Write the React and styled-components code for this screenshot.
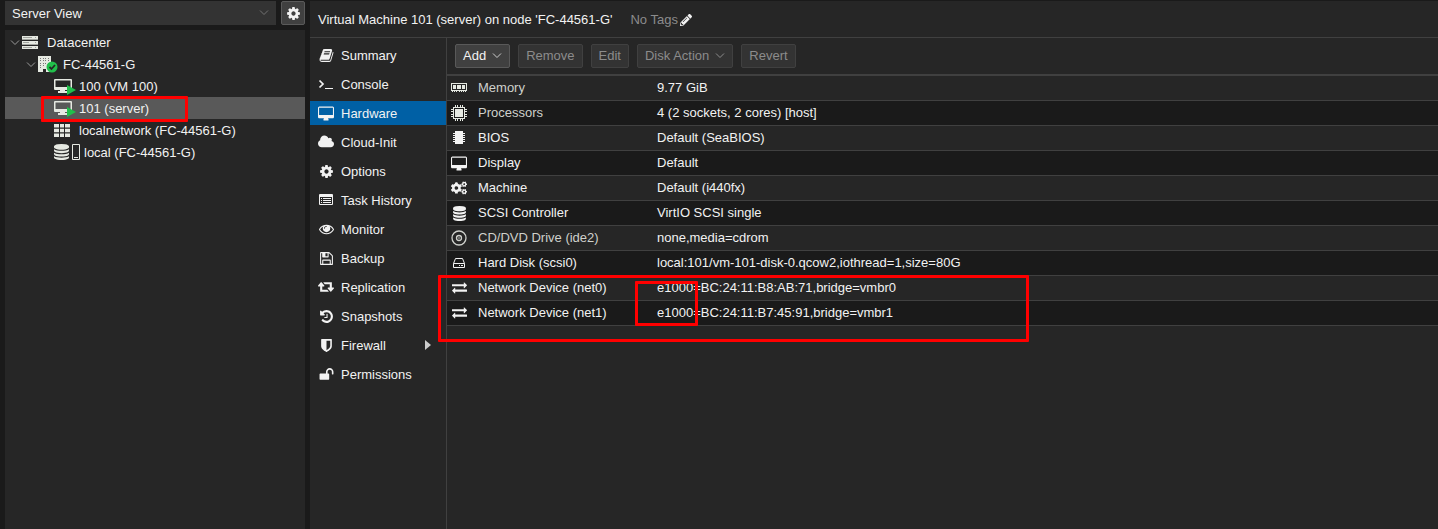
import React, { useState } from "react";
import styled, { createGlobalStyle } from "styled-components";
import { FaCogs, FaPencilAlt } from "react-icons/fa";

const GlobalStyle = createGlobalStyle`
  * {
    box-sizing: border-box;
  }
  body {
    margin: 0;
    background-color: #1a1a1a;
    color: #f2f2f2;
    font-family: "Liberation Sans", Arial, sans-serif;
    font-size: 13px;
    line-height: 16px;
  }
  svg {
    display: block;
    flex: none;
  }
`;

const GEAR =
  "M1152 896q0-106-75-181t-181-75-181 75-75 181 75 181 181 75 181-75 75-181zm512-109v222q0 12-8 23t-20 13l-185 28q-19 54-39 91 35 50 107 138 10 12 10 25t-9 23q-27 37-99 108t-94 71q-12 0-26-9l-138-108q-44 23-91 38-16 136-29 186-7 28-36 28h-222q-14 0-24.5-8.5t-11.5-21.5l-28-184q-49-16-90-37l-141 107q-10 9-25 9-14 0-25-11-126-114-165-168-7-10-7-23 0-12 8-23 15-21 51-66.5t54-70.5q-27-50-41-99l-183-27q-13-2-21-12.5t-8-23.5v-222q0-12 8-23t19-13l186-28q14-46 39-92-40-57-107-138-10-12-10-24 0-10 9-23 26-36 98.5-107.5t94.5-71.5q13 0 26 10l138 107q44-23 91-38 16-136 29-186 7-28 36-28h222q14 0 24.5 8.5t11.5 21.5l28 184q49 16 90 37l142-107q9-9 24-9 13 0 25 10 129 119 165 170 7 8 7 22 0 12-8 23-15 21-51 66.5t-54 70.5q26 50 41 98l183 28q13 2 21 12.5t8 23.5z";
const DESKTOP =
  "M1728 992v-832q0-13-9.5-22.5t-22.5-9.5h-1600q-13 0-22.5 9.5t-9.5 22.5v832q0 13 9.5 22.5t22.5 9.5h1600q13 0 22.5-9.5t9.5-22.5zm128-832v1088q0 66-47 113t-113 47h-544q0 37 16 77.5t32 71 16 43.5q0 26-19 45t-45 19h-512q-26 0-45-19t-19-45q0-14 16-44t32-70 16-78h-544q-66 0-113-47t-47-113v-1088q0-66 47-113t113-47h1600q66 0 113 47t47 113z";
const CLOUD =
  "M1984 1152q0 159-112.5 271.5t-271.5 112.5h-1088q-185 0-316.5-131.5t-131.5-316.5q0-132 71-241.5t187-163.5q-2-28-2-43 0-212 150-362t362-150q158 0 286.5 88t187.5 230q70-62 166-62 106 0 181 75t75 181q0 75-41 138 129 30 213 134.5t84 239.5z";
const EYE =
  "M1664 960q-152-236-381-353 61 104 61 225 0 185-131.5 316.5t-316.5 131.5-316.5-131.5-131.5-316.5q0-121 61-225-229 117-381 353 133 205 333.5 326.5t434.5 121.5 434.5-121.5 333.5-326.5zm-720-384q0-20-14-34t-34-14q-125 0-214.5 89.5t-89.5 214.5q0 20 14 34t34 14 34-14 14-34q0-86 61-147t147-61q20 0 34-14t14-34zm848 384q0 34-20 69-140 230-376.5 368.5t-499.5 138.5-499.5-139-376.5-368q-20-35-20-69t20-69q140-229 376.5-368t499.5-139 499.5 139 376.5 368q20 35 20 69z";
const RETWEET =
  "M1280 1504q0 13-9.5 22.5t-22.5 9.5h-960q-8 0-13.5-2t-9-7-5.5-8-3-11.5-1-11.5v-600h-192q-26 0-45-19t-19-45q0-24 15-41l320-384q19-22 49-22t49 22l320 384q15 17 15 41 0 26-19 45t-45 19h-192v384h576q16 0 25 11l160 192q7 10 7 21zm640-416q0 24-15 41l-320 384q-20 23-49 23t-49-23l-320-384q-15-17-15-41 0-26 19-45t45-19h192v-384h-576q-16 0-25-12l-160-192q-7-9-7-20 0-13 9.5-22.5t22.5-9.5h960q8 0 13.5 2t9 7 5.5 8 3 11.5 1 11.5v600h192q26 0 45 19t19 45z";
const HISTORY =
  "M1664 896q0 156-61 298t-164 245-245 164-298 61q-172 0-327-72.5t-264-204.5q-7-10-6.5-22.5t8.5-20.5l137-138q10-9 25-9 16 2 23 12 73 95 179 147t225 52q104 0 198.5-40.5t163.5-109.5 109.5-163.5 40.5-198.5-40.5-198.5-109.5-163.5-163.5-109.5-198.5-40.5q-98 0-188 35.5t-160 101.5l137 138q31 30 14 69-17 40-59 40h-448q-26 0-45-19t-19-45v-448q0-42 40-59 39-17 69 14l130 129q107-101 244.5-156.5t284.5-55.5q156 0 298 61t245 164 164 245 61 298zm-640-288v448q0 14-9 23t-23 9h-320q-14 0-23-9t-9-23v-64q0-14 9-23t23-9h224v-352q0-14 9-23t23-9h64q14 0 23 9t9 23z";
const SHIELD =
  "M1344 960v-640h-448v1137q119-63 213-137 235-184 235-360zm192-768v768q0 86-33.5 170.5t-83 150-118 127.5-126.5 103-121 77.5-89.5 49.5-42.5 20q-12 6-26 6t-26-6q-16-7-42.5-20t-89.5-49.5-121-77.5-126.5-103-118-127.5-83-150-33.5-170.5v-768q0-26 19-45t45-19h1152q26 0 45 19t19 45z";
const UNLOCK =
  "M1728 576v256q0 26-19 45t-45 19h-64q-26 0-45-19t-19-45v-256q0-106-75-181t-181-75-181 75-75 181v192h96q40 0 68 28t28 68v576q0 40-28 68t-68 28h-960q-40 0-68-28t-28-68v-576q0-40 28-68t68-28h672v-192q0-185 131.5-316.5t316.5-131.5 316.5 131.5 131.5 316.5z";
const EXCHANGE =
  "M1792 1184v192q0 13-9.5 22.5t-22.5 9.5h-1376v192q0 13-9.5 22.5t-22.5 9.5q-12 0-24-10l-319-320q-9-9-9-22 0-14 9-23l320-320q9-9 23-9 13 0 22.5 9.5t9.5 22.5v192h1376q13 0 22.5 9.5t9.5 22.5zm0-544q0 14-9 23l-320 320q-9 9-23 9-13 0-22.5-9.5t-9.5-22.5v-192h-1376q-13 0-22.5-9.5t-9.5-22.5v-192q0-13 9.5-22.5t22.5-9.5h1376v-192q0-14 9-23t23-9q12 0 24 10l319 319q9 9 9 23z";
const DATABASE =
  "M896 768q237 0 443-43t325-127v170q0 69-103 128t-280 93.5-385 34.5-385-34.5-280-93.5-103-128v-170q119 84 325 127t443 43zm0 768q237 0 443-43t325-127v170q0 69-103 128t-280 93.5-385 34.5-385-34.5-280-93.5-103-128v-170q119 84 325 127t443 43zm0-384q237 0 443-43t325-127v170q0 69-103 128t-280 93.5-385 34.5-385-34.5-280-93.5-103-128v-170q119 84 325 127t443 43zm0-1152q208 0 385 34.5t280 93.5 103 128v128q0 69-103 128t-280 93.5-385 34.5-385-34.5-280-93.5-103-128v-128q0-69 103-128t280-93.5 385-34.5z";
const FLOPPY =
  "M512 1536h768v-384h-768v384zm896 0h128v-896q0-14-10-38.5t-20-34.5l-281-281q-10-10-34-20t-39-10v416q0 40-28 68t-68 28h-576q-40 0-68-28t-28-68v-416h-128v1280h128v-416q0-40 28-68t68-28h832q40 0 68 28t28 68v416zm-384-928v-320q0-13-9.5-22.5t-22.5-9.5h-192q-13 0-22.5 9.5t-9.5 22.5v320q0 13 9.5 22.5t22.5 9.5h192q13 0 22.5-9.5t9.5-22.5zm640 32v928q0 40-28 68t-68 28h-1344q-40 0-68-28t-28-68v-1344q0-40 28-68t68-28h928q40 0 88 20t76 48l280 280q28 28 48 76t20 88z";
const BOOK =
  "M1703 478q40 57 18 129l-275 906q-19 64-76.5 107.5t-122.5 43.5h-923q-77 0-148.5-53.5t-99.5-131.5q-24-67-2-127 0-4 3-27t4-37q1-8-3-21.5t-3-19.5q2-11 8-21t16.5-23.5 16.5-23.5q23-38 45-91.5t30-91.5q3-10 .5-30t-.5-28q3-11 17-28t17-23q21-36 42-92t25-90q1-9-2.5-32t.5-28q4-13 22-30.5t22-22.5q19-26 42.5-84.5t27.5-96.5q1-8-3-25.5t-2-26.5q2-8 9-18t18-23 17-21q8-12 16.5-30.5t15-35 16-36 19.5-32 26.5-23.5 36-11.5 47.5 5.5l-1 3q38-9 51-9h761q74 0 114 56t18 130l-274 906q-36 119-71.5 153.5t-128.5 34.5h-869q-27 0-38 15-11 16-1 43 24 70 144 70h923q29 0 56-15.5t35-41.5l300-987q7-22 5-57 38 15 59 43zm-1064 2q-4 13 2 22.5t20 9.5h608q13 0 25.5-9.5t16.5-22.5l21-64q4-13-2-22.5t-20-9.5h-608q-13 0-25.5 9.5t-16.5 22.5zm-83 256q-4 13 2 22.5t20 9.5h608q13 0 25.5-9.5t16.5-22.5l21-64q4-13-2-22.5t-20-9.5h-608q-13 0-25.5 9.5t-16.5 22.5z";

const Glyph = ({ d, box = "0 0 1792 1792", size = 15 }) => (
  <svg
    viewBox={box}
    height={size}
    width={Math.round((size * box.split(" ")[2]) / 1792)}
    fill="currentColor"
    aria-hidden="true"
  >
    <path d={d} />
  </svg>
);

const Desktop = () => <Glyph d={DESKTOP} box="-64 -64 1920 1792" />;

const Chevron = ({ color = "#999" }) => (
  <svg width="10" height="6" viewBox="0 0 10 6" fill="none" stroke={color}>
    <path d="M1 .5l4 4 4-4" />
  </svg>
);

const Terminal = () => (
  <svg width="16" height="14" viewBox="0 0 16 14" fill="none" stroke="currentColor">
    <path d="M1.5 3.5L5 7l-3.500 3.500" strokeWidth="1.700" />
    <path d="M7 11.500h8" />
  </svg>
);

const ListAlt = () => (
  <svg width="14" height="12" viewBox="0 0 14 12" fill="currentColor">
    <path
      fillRule="evenodd"
      d="M1 0h12a1 1 0 0 1 1 1v9a1 1 0 0 1-1 1H1a1 1 0 0 1-1-1V1a1 1 0 0 1 1-1zm0 3v7h12V3z"
    />
    <path d="M2 4h1v1H2zM4 4h8v1H4zM2 6h1v1H2zM4 6h8v1H4zM2 8h1v1H2zM4 8h8v1H4z" />
  </svg>
);

const ServerIcon = () => (
  <svg width="16" height="14" viewBox="0 0 16 14">
    <path fill="#e6e9e2" d="M0 1h16v3H0zM0 6h16v3H0zM0 11h16v3H0z" />
    <path
      fill="#a3a5a0"
      d="M1 2h9v1H1zM13 2h1v1h-1zM1 7h6v1H1zM13 7h1v1h-1zM1 12h9v1H1zM13 12h1v1h-1zM0 4h16v1H0zM0 9h16v1H0z"
    />
  </svg>
);

const NodeIcon = () => (
  <svg width="20" height="18" viewBox="0 0 20 18">
    <path fill="#e6e9e2" d="M0 1h13v16H0z" />
    <path
      fill="#777"
      d="M2 3h1v1H2zM5 3h1v1H5zM7 3h1v1H7zM10 3h1v1h-1zM2 5h1v1H2zM5 5h1v1H5zM7 5h1v1H7zM10 5h1v1h-1zM2 8h1v1H2zM5 8h1v1H5zM7 8h1v1H7zM2 10h1v1H2zM5 10h1v1H5zM2 12h1v1H2z"
    />
    <path fill="#262626" d="M5 14h3v3H5z" />
    <circle cx="14" cy="12" r="5.500" fill="#21bf4b" />
    <path d="M11.500 12l2 2 3.500-4" fill="none" stroke="#262626" strokeWidth="1.800" />
  </svg>
);

const VmIcon = () => (
  <svg width="22" height="20" viewBox="0 0 22 20">
    <path
      fill="#e6e9e2"
      fillRule="evenodd"
      d="M1 3h16a1 1 0 0 1 1 1v9a1 1 0 0 1-1 1h-6v1h2v2H4v-2h2v-1H1a1 1 0 0 1-1-1V4a1 1 0 0 1 1-1zm.500 1.500V11h15V4.500z"
    />
    <path fill="#21bf4b" d="M13 9l9 5-9 5z" />
  </svg>
);

const GridIcon = () => (
  <svg width="16" height="13" viewBox="0 0 16 13" fill="#e6e9e2">
    <path d="M0 0h5v3.500H0zM6 0h4v3.500H6zM11 0h5v3.500h-5zM0 4.700h5v3.500H0zM6 4.700h4v3.500H6zM11 4.700h5v3.500h-5zM0 9.500h5V13H0zM6 9.500h4V13H6zM11 9.500h5V13h-5z" />
  </svg>
);

const StorageIcon = () => (
  <svg width="26" height="18" viewBox="0 0 26 18">
    <g fill="#e6e9e2">
      <svg x="0" y="1" width="15" height="16" viewBox="128 0 1536 1792" preserveAspectRatio="none">
        <path d={DATABASE} />
      </svg>
    </g>
    <path d="M18.500 1.500h7v15h-7zM20 14.500h4" fill="none" stroke="#e6e9e2" />
  </svg>
);

const MemoryIcon = () => (
  <svg width="16" height="10" viewBox="0 0 16 10" fill="#e6e9e2">
    <path
      fillRule="evenodd"
      d="M0 0h16v8H0zM1 1v6h14V1zM2 2h3v4H2zM6 2h4v4H6zM11 2h3v4h-3z"
    />
    <path d="M1 8h1v1H1zM3 8h1v1H3zM5 8h1v1H5zM8 8h1v1H8zM10 8h1v1h-1zM12 8h1v1h-1zM14 8h1v1h-1z" />
  </svg>
);

const CpuIcon = () => (
  <svg width="16" height="16" viewBox="0 0 16 16" fill="#e6e9e2">
    <path fillRule="evenodd" d="M2 2h12v12H2zM3 3v10h10V3z" />
    <path d="M4 4h8v8H4z" />
    <path d="M4 0h1v2H4zM6 0h1v2H6zM9 0h1v2H9zM11 0h1v2h-1zM4 14h1v2H4zM6 14h1v2H6zM9 14h1v2H9zM11 14h1v2h-1zM0 4h2v1H0zM0 6h2v1H0zM0 9h2v1H0zM0 11h2v1H0zM14 4h2v1h-2zM14 6h2v1h-2zM14 9h2v1h-2zM14 11h2v1h-2z" />
  </svg>
);

const ChipIcon = () => (
  <svg width="12" height="14" viewBox="0 0 12 14" fill="#f2f2f2">
    <path d="M2 0h8v13H2z" />
    <path d="M0 2h12v1H0zM0 4h12v1H0zM0 6h12v1H0zM0 8h12v1H0zM0 10h12v1H0z" />
  </svg>
);

const DiscIcon = () => (
  <svg width="16" height="16" viewBox="0 0 16 16" fill="none" stroke="#cfd1cc">
    <circle cx="8" cy="8" r="7" strokeWidth="1.300" />
    <circle cx="8" cy="8" r="2.500" strokeWidth="1.300" />
    <circle cx="8" cy="8" r=".8" fill="#cfd1cc" stroke="none" />
  </svg>
);

const DiskIcon = () => (
  <svg width="12" height="12" viewBox="0 0 12 12" fill="none" stroke="currentColor">
    <path d="M.5 6.500L2.500 1.500h7l2 5v4H.5zM.5 6.500h11" />
    <path d="M6 8.500h1M8 8.500h2" />
  </svg>
);

const Page = styled.div`
  display: flex;
  gap: 5px;
  min-height: 100vh;
  padding: 1px 0 0 5px;
`;

const Sidebar = styled.aside`
  display: flex;
  flex-direction: column;
  flex: 0 0 300px;
  gap: 5px;
`;

const ViewBar = styled.div`
  display: flex;
  gap: 5px;
`;

const SelectWrap = styled.div`
  position: relative;
  flex: 1;
  > svg {
    position: absolute;
    right: 7px;
    top: 9px;
    pointer-events: none;
  }
`;

const ViewSelect = styled.select`
  appearance: none;
  display: block;
  width: 100%;
  height: 24px;
  padding: 1px 7px 0;
  border: 0;
  background-color: #333;
  color: #f2f2f2;
  font: inherit;
`;

const GearButton = styled.button`
  display: flex;
  align-items: center;
  justify-content: center;
  width: 24px;
  height: 24px;
  padding: 0;
  border: 1px solid #5a5a5a;
  border-radius: 2px;
  background-color: #404040;
  color: #f2f2f2;
`;

const Tree = styled.ul`
  flex: 1;
  margin: 0;
  padding: 1px 0 0;
  list-style: none;
  background-color: #262626;
`;

const TreeRow = styled.li`
  position: relative;
  display: flex;
  align-items: center;
  height: 22px;
  padding-left: ${(p) => 5 + p.$depth * 16}px;
  background-color: ${(p) => (p.$selected ? "#595959" : "transparent")};
`;

const Label = styled.span`
  padding-top: 2px;
`;

const Expander = styled.span`
  width: 12px;
  padding-top: 2px;
`;

const TreeIcon = styled.span`
  width: ${(p) => (p.$wide ? 30 : 25)}px;
`;

const Main = styled.main`
  display: flex;
  flex-direction: column;
  flex: 1;
  min-width: 0;
  background-color: #262626;
`;

const TitleBar = styled.header`
  display: flex;
  align-items: center;
  gap: 18px;
  height: 37px;
  padding: 2px 0 0 8px;
  border-bottom: 1px solid #404040;
`;

const Title = styled.h1`
  margin: 0;
  font-size: 13px;
  font-weight: normal;
`;

const Tags = styled.div`
  display: flex;
  align-items: center;
  gap: 2px;
  color: #8c8c8c;
  svg {
    color: #f2f2f2;
  }
`;

const Body = styled.div`
  display: flex;
  flex: 1;
`;

const Menu = styled.nav`
  display: flex;
  flex-direction: column;
  gap: 5px;
  flex: 0 0 137px;
  padding-top: 5px;
  border-right: 1px solid #404040;
`;

const MenuLink = styled.a`
  display: flex;
  align-items: center;
  height: 24px;
  padding: 0 15px 0 8px;
  color: #f2f2f2;
  text-decoration: none;
  background-color: ${(p) => (p.$active ? "#0060a5" : "transparent")};
`;

const MenuIcon = styled.span`
  display: flex;
  justify-content: center;
  width: 16px;
  margin-right: 7px;
`;

const MenuArrow = styled.span`
  margin-left: auto;
  border-left: 6px solid #ccc;
  border-top: 5px solid transparent;
  border-bottom: 5px solid transparent;
`;

const Content = styled.section`
  flex: 1;
  min-width: 0;
`;

const Toolbar = styled.div`
  display: flex;
  align-items: center;
  gap: 8px;
  height: 38px;
  padding-left: 8px;
  border-bottom: 2px solid #404040;
`;

const ToolButton = styled.button`
  display: flex;
  align-items: center;
  gap: 6px;
  height: 24px;
  padding: 0 7px;
  border: 1px solid #595959;
  border-radius: 2px;
  background-color: #404040;
  color: #f2f2f2;
  font: inherit;
  &:disabled {
    border-color: #404040;
    background-color: #333;
    color: #8c8c8c;
  }
`;

const GridWrap = styled.div`
  position: relative;
`;

const HardwareTable = styled.table`
  width: 100%;
  border-spacing: 0;
  table-layout: fixed;
`;

const HardwareRow = styled.tr`
  height: 25px;
  > * {
    border-bottom: 1px solid #404040;
  }
  &:nth-child(even) {
    background-color: #1a1a1a;
  }
`;

const NameCell = styled.th`
  width: 205px;
  padding: 0 0 0 3px;
  font-weight: normal;
  text-align: left;
  color: ${(p) => (p.$dim ? "#cfd1cc" : "#f2f2f2")};
`;

const NameInner = styled.div`
  display: flex;
  align-items: center;
  gap: 10px;
`;

const HardwareIcon = styled.span`
  display: flex;
  justify-content: center;
  width: 18px;
`;

const ValueCell = styled.td`
  padding: 0 5px;
`;

// red highlight frames drawn over the tree and the grid
const Mark = styled.div`
  position: absolute;
  left: ${(p) => p.$x}px;
  top: ${(p) => p.$y}px;
  width: ${(p) => p.$w}px;
  height: ${(p) => p.$h}px;
  border: 3px solid #ff0000;
  border-radius: 1px;
  pointer-events: none;
  z-index: 1;
`;

const tree = [
  { label: "Datacenter", depth: 0, icon: <ServerIcon />, open: true },
  { label: "FC-44561-G", depth: 1, icon: <NodeIcon />, open: true },
  { label: "100 (VM 100)", depth: 2, icon: <VmIcon /> },
  { label: "101 (server)", depth: 2, icon: <VmIcon />, selected: true },
  { label: "localnetwork (FC-44561-G)", depth: 2, icon: <GridIcon /> },
  { label: "local (FC-44561-G)", depth: 2, icon: <StorageIcon />, wide: true },
];

const menu = [
  { label: "Summary", icon: <Glyph d={BOOK} /> },
  { label: "Console", icon: <Terminal /> },
  { label: "Hardware", icon: <Desktop /> },
  { label: "Cloud-Init", icon: <Glyph d={CLOUD} box="64 64 1920 1792" /> },
  { label: "Options", icon: <Glyph d={GEAR} /> },
  { label: "Task History", icon: <ListAlt /> },
  { label: "Monitor", icon: <Glyph d={EYE} box="0 64 1792 1792" /> },
  { label: "Backup", icon: <Glyph d={FLOPPY} /> },
  { label: "Replication", icon: <Glyph d={RETWEET} box="0 128 1920 1792" /> },
  { label: "Snapshots", icon: <Glyph d={HISTORY} /> },
  { label: "Firewall", icon: <Glyph d={SHIELD} />, more: true },
  { label: "Permissions", icon: <Glyph d={UNLOCK} /> },
];

const hardware = [
  { name: "Memory", value: "9.77 GiB", icon: <MemoryIcon />, dim: true },
  { name: "Processors", value: "4 (2 sockets, 2 cores) [host]", icon: <CpuIcon />, dim: true },
  { name: "BIOS", value: "Default (SeaBIOS)", icon: <ChipIcon /> },
  { name: "Display", value: "Default", icon: <Desktop /> },
  { name: "Machine", value: "Default (i440fx)", icon: <FaCogs size={16} /> },
  { name: "SCSI Controller", value: "VirtIO SCSI single", icon: <Glyph d={DATABASE} /> },
  { name: "CD/DVD Drive (ide2)", value: "none,media=cdrom", icon: <DiscIcon />, dim: true },
  {
    name: "Hard Disk (scsi0)",
    value: "local:101/vm-101-disk-0.qcow2,iothread=1,size=80G",
    icon: <DiskIcon />,
  },
  {
    name: "Network Device (net0)",
    value: "e1000=BC:24:11:B8:AB:71,bridge=vmbr0",
    icon: <Glyph d={EXCHANGE} box="0 128 1792 1792" />,
  },
  {
    name: "Network Device (net1)",
    value: "e1000=BC:24:11:B7:45:91,bridge=vmbr1",
    icon: <Glyph d={EXCHANGE} box="0 128 1792 1792" />,
  },
];

function App() {
  const [active, setActive] = useState("Hardware");

  return (
    <>
      <GlobalStyle />
      <Page>
        <Sidebar>
          <ViewBar>
            <SelectWrap>
              <ViewSelect aria-label="View">
                <option>Server View</option>
              </ViewSelect>
              <Chevron color="#737373" />
            </SelectWrap>
            <GearButton type="button" aria-label="Settings">
              <Glyph d={GEAR} />
            </GearButton>
          </ViewBar>
          <Tree>
            {tree.map((n) => (
              <TreeRow key={n.label} $depth={n.depth} $selected={n.selected}>
                <Expander>{n.open && <Chevron />}</Expander>
                <TreeIcon $wide={n.wide}>{n.icon}</TreeIcon>
                <Label>{n.label}</Label>
                {n.selected && <Mark $x={36} $y={-1} $w={147} $h={26} />}
              </TreeRow>
            ))}
          </Tree>
        </Sidebar>
        <Main>
          <TitleBar>
            <Title>Virtual Machine 101 (server) on node 'FC-44561-G'</Title>
            <Tags>
              No Tags <FaPencilAlt size={12} />
            </Tags>
          </TitleBar>
          <Body>
            <Menu>
              {menu.map((m) => (
                <MenuLink
                  key={m.label}
                  href="#"
                  $active={m.label === active}
                  onClick={() => setActive(m.label)}
                >
                  <MenuIcon>{m.icon}</MenuIcon>
                  <Label>{m.label}</Label>
                  {m.more && <MenuArrow />}
                </MenuLink>
              ))}
            </Menu>
            <Content>
              <Toolbar>
                <ToolButton type="button">
                  Add <Chevron color="#ccc" />
                </ToolButton>
                <ToolButton type="button" disabled>
                  Remove
                </ToolButton>
                <ToolButton type="button" disabled>
                  Edit
                </ToolButton>
                <ToolButton type="button" disabled>
                  Disk Action <Chevron color="#8c8c8c" />
                </ToolButton>
                <ToolButton type="button" disabled>
                  Revert
                </ToolButton>
              </Toolbar>
              <GridWrap>
                <HardwareTable>
                  <tbody>
                    {hardware.map((h) => (
                      <HardwareRow key={h.name}>
                        <NameCell scope="row" $dim={h.dim}>
                          <NameInner>
                            <HardwareIcon>{h.icon}</HardwareIcon>
                            {h.name}
                          </NameInner>
                        </NameCell>
                        <ValueCell>{h.value}</ValueCell>
                      </HardwareRow>
                    ))}
                  </tbody>
                </HardwareTable>
                <Mark $x={-9} $y={199} $w={591} $h={67} />
                <Mark $x={188} $y={205} $w={63} $h={45} />
              </GridWrap>
            </Content>
          </Body>
        </Main>
      </Page>
    </>
  );
}

export default App;
